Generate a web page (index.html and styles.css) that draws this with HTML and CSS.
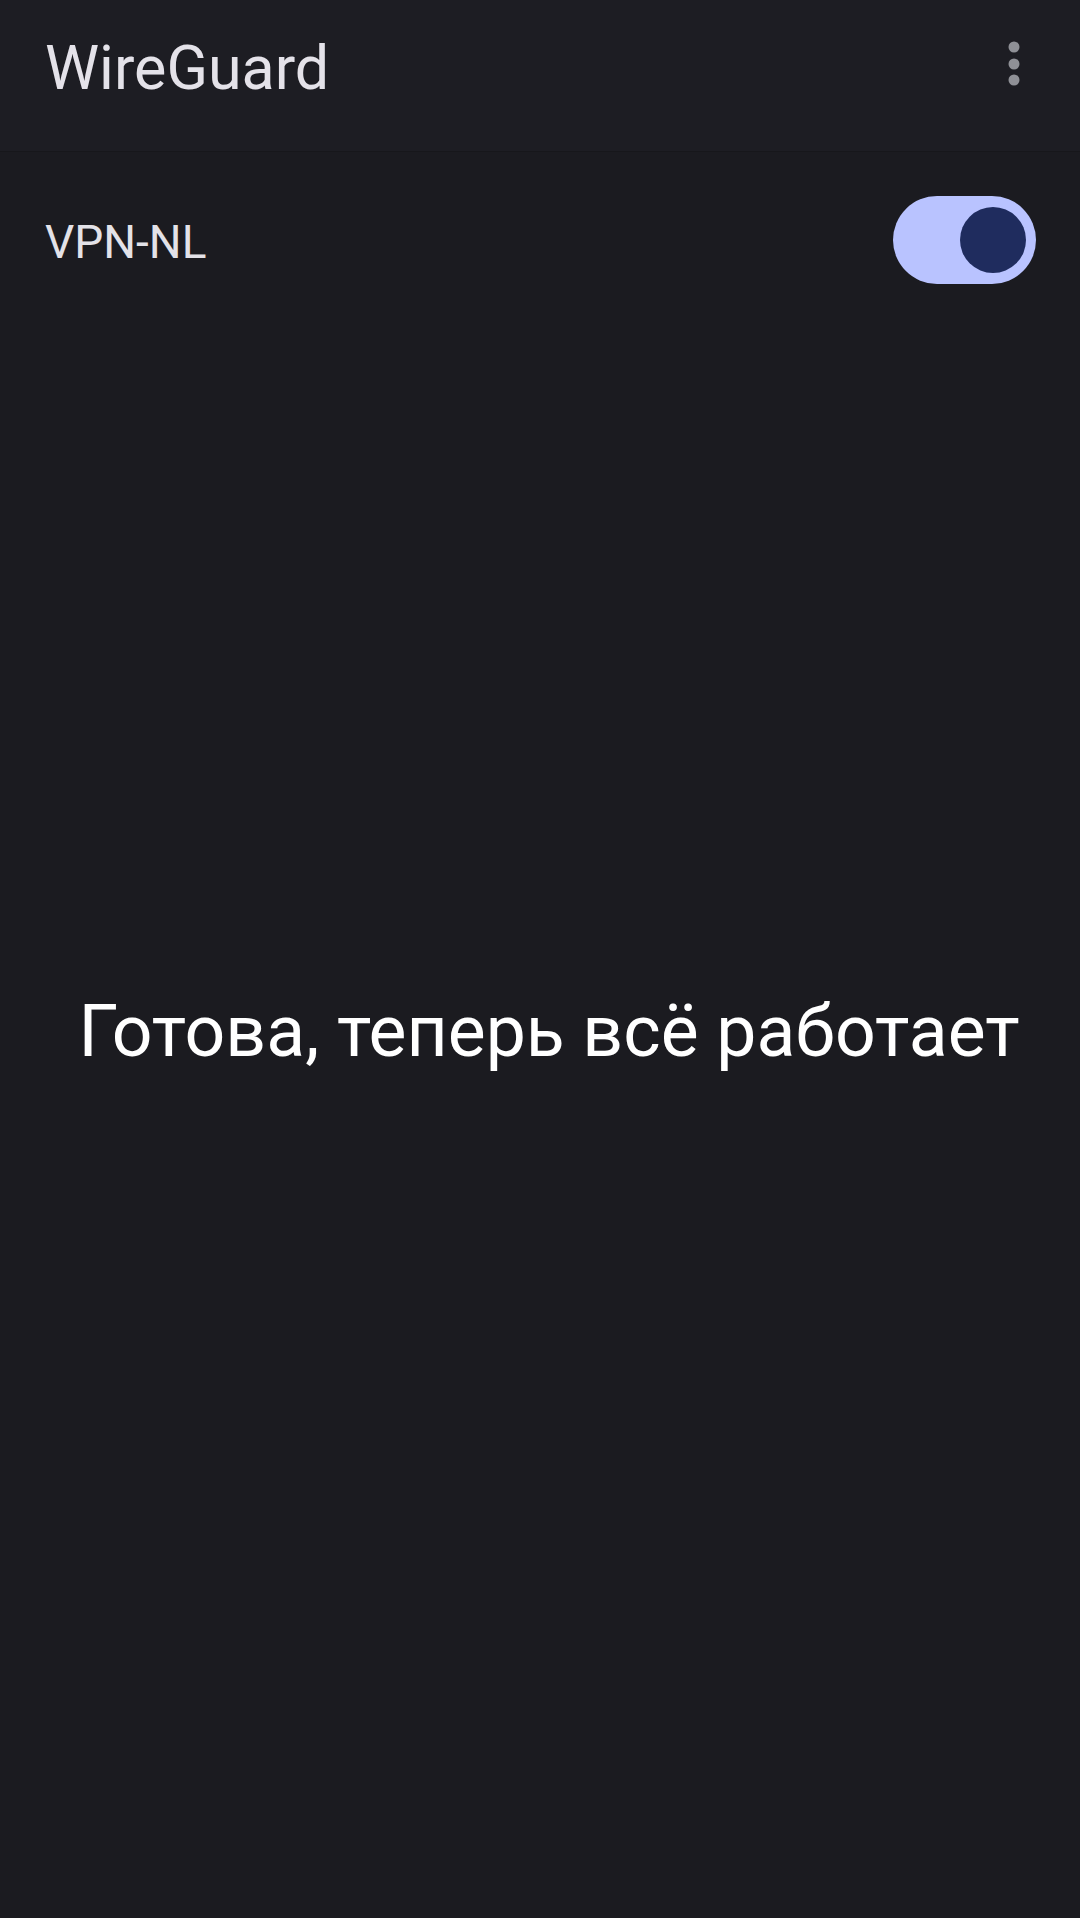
FILE: index.html
```html
<!DOCTYPE html>
<html lang="ru">
<head>
	<meta charset="UTF-8">
	<title>WireGuard</title>
	<link rel="stylesheet" href="styles.css">
</head>
<body>
	<header class="topbar">
		<h1 class="title">WireGuard</h1>
		<button class="menu" aria-label="menu">
			<svg width="24" height="72" viewBox="0 0 24 72">
				<circle cx="12" cy="19" r="5.5"/>
				<circle cx="12" cy="36" r="5.5"/>
				<circle cx="12" cy="52" r="5.5"/>
			</svg>
		</button>
	</header>
	<section class="tunnel">
		<span class="name">VPN-NL</span>
		<div class="switch on"><div class="thumb"></div></div>
	</section>
	<main class="msg">
		<p>Готова, теперь всё работает</p>
	</main>
</body>
</html>
```

FILE: styles.css
```css
html, body {
	margin: 0;
	padding: 0;
}
body {
	background-color: #1b1b20;
	font-family: Roboto, "Noto Sans", sans-serif;
	height: 1918px;
	overflow: hidden;
}
header.topbar {
	background-color: #1d1d23;
	height: 152px;
	box-sizing: border-box;
	display: flex;
	align-items: flex-start;
	justify-content: space-between;
	padding: 0 54px 0 45px;
	border-bottom: 1px solid #17171b;
}
header.topbar h1.title {
	margin: 32px 0 0 0;
	font-size: 61px;
	font-weight: 400;
	line-height: normal;
	color: #e4e2e9;
}
header.topbar button.menu {
	background: none;
	border: none;
	padding: 0;
	margin-top: 28px;
	display: block;
}
header.topbar button.menu svg {
	display: block;
	fill: #8f9096;
}
section.tunnel {
	height: 176px;
	box-sizing: border-box;
	display: flex;
	align-items: center;
	justify-content: space-between;
	padding: 0 44px 0 45px;
}
section.tunnel span.name {
	font-size: 46px;
	color: #e3e2e8;
	margin-top: 3px;
}
div.switch {
	width: 143px;
	height: 88px;
	border-radius: 44px;
	background-color: #b9c3ff;
	box-sizing: border-box;
	display: flex;
	align-items: center;
	justify-content: flex-end;
	padding: 0 10px;
}
div.switch div.thumb {
	width: 66px;
	height: 66px;
	border-radius: 50%;
	background-color: #1f2c5e;
}
main.msg {
	padding: 662px 0 0 18px;
}
main.msg p {
	margin: 0;
	text-align: center;
	font-size: 71.5px;
	line-height: normal;
	color: #ffffff;
}
```
